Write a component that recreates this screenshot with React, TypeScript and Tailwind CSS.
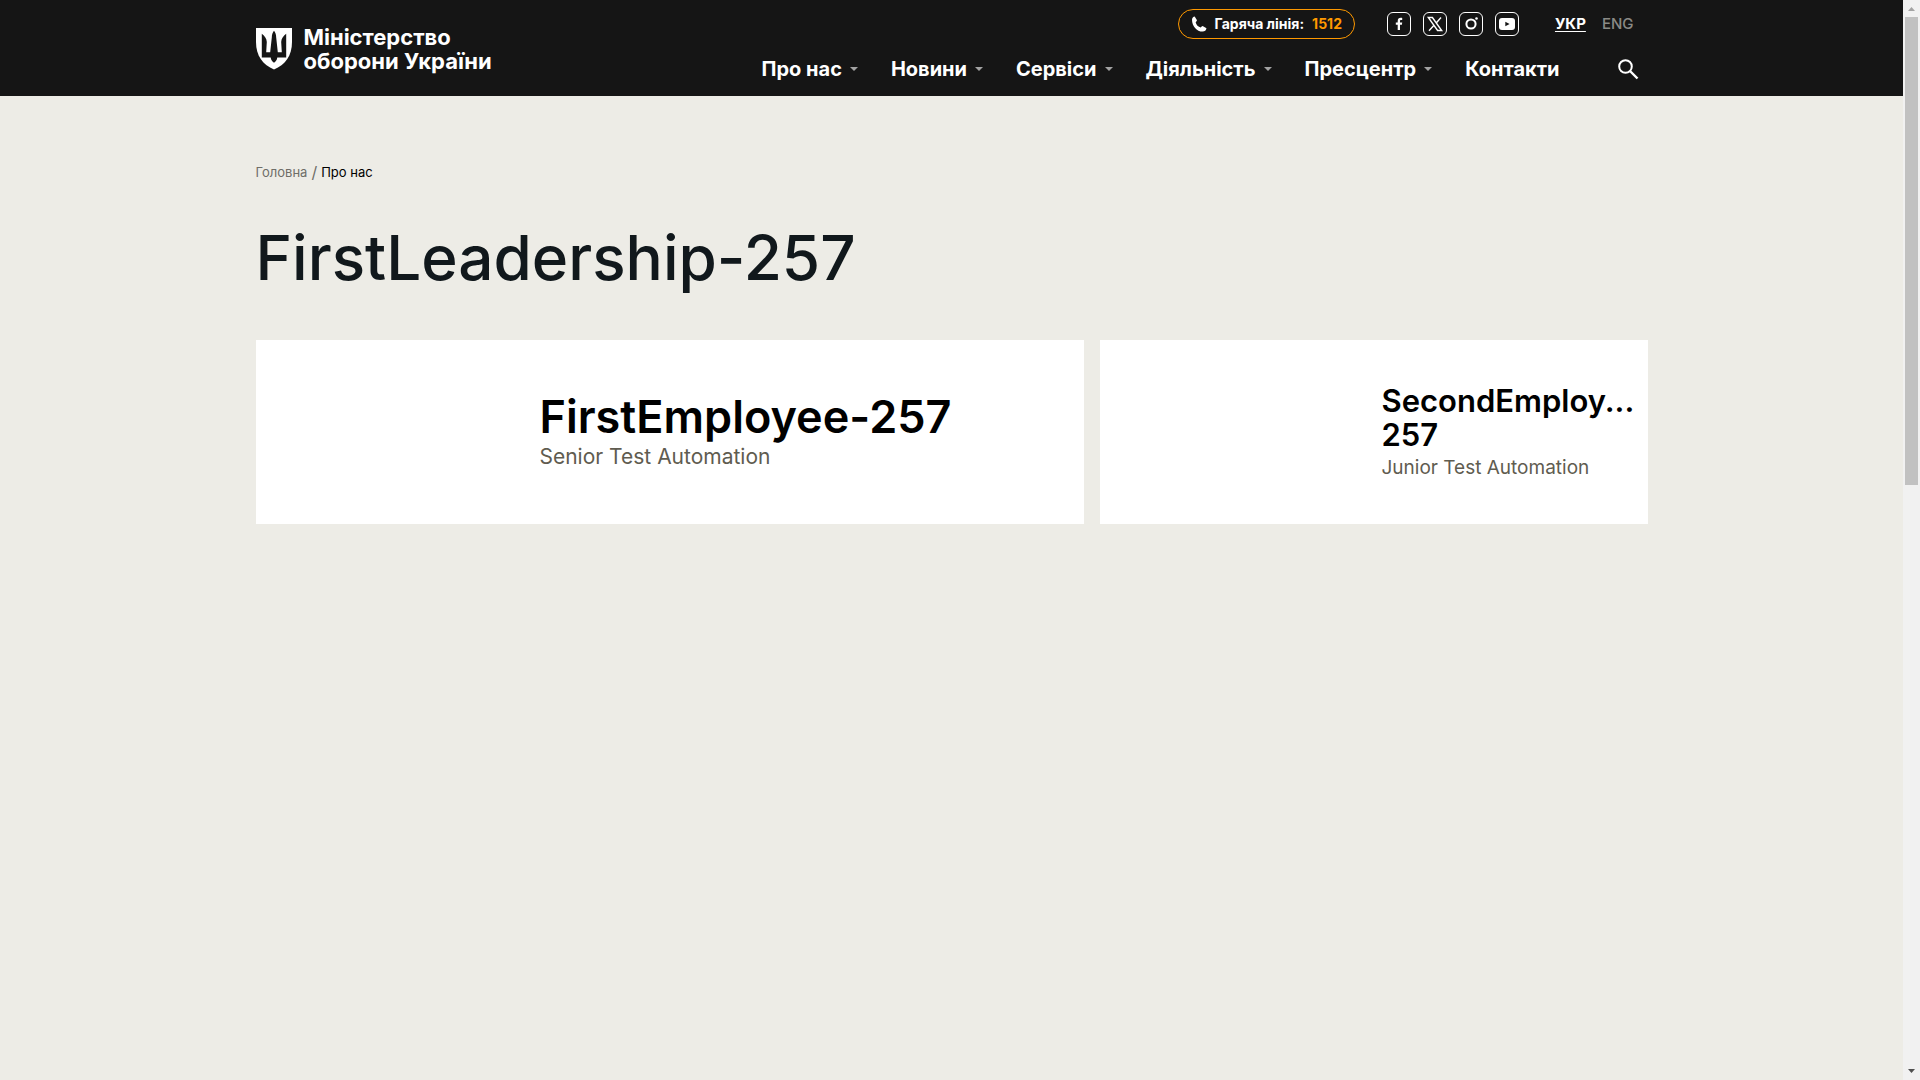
import React from "react";

const NAV = [
  { label: "Про нас", menu: true },
  { label: "Новини", menu: true },
  { label: "Сервіси", menu: true },
  { label: "Діяльність", menu: true },
  { label: "Пресцентр", menu: true },
  { label: "Контакти", menu: false },
];

function Shield() {
  return (
    <svg viewBox="0 0 36 42" className="h-[42px] w-9 shrink-0" aria-hidden="true">
      <path d="M0 0H36V14C36 28 29 37 18 41.5C7 37 0 28 0 14Z" fill="#fff" />
      <path
        d="M5.8 5.8C8.8 8 10.6 10.6 10.8 14L10.2 24.3H14.2L15.8 9.5C15.8 6.5 16.8 4.3 18 2.8C19.2 4.3 20.2 6.5 20.2 9.5L21.8 24.3H25.8L25.2 14C25.4 10.6 27.2 8 30.2 5.8V29.5H21.3C21 31.8 19.8 33.6 18 34.8C16.2 33.6 15 31.8 14.7 29.5H5.8Z"
        fill="#151515"
      />
    </svg>
  );
}

function Social({ label, children }: { label: string; children: React.ReactNode }) {
  return (
    <a href="#" aria-label={label} className="block size-6">
      <svg viewBox="0 0 24 24" className="size-6" fill="none">
        <rect x="0.5" y="0.5" width="23" height="23" rx="5.5" stroke="#fff" />
        {children}
      </svg>
    </a>
  );
}

function Header() {
  return (
    <header className="bg-[#151515] text-white">
      <div className="mx-auto flex h-24 max-w-[1392px] justify-between">
        <a href="#" className="flex items-center gap-3 pt-px text-[22px] font-bold leading-6">
          <Shield />
          <span>
            Міністерство
            <br />
            оборони України
          </span>
        </a>
        <div className="flex flex-col items-end">
          <div className="flex h-12 items-center pr-[14px]">
            <a
              href="tel:1512"
              className="mr-8 flex h-[30px] items-center rounded-full border border-[#f90] px-3 text-sm font-bold"
            >
              <svg viewBox="0 0 24 24" className="mr-2 size-4" fill="#fff" aria-hidden="true">
                <path d="M1.5 5.5C1.5 3 3.5 1 5.5.8L9 6.5C8.4 8 7.6 8.7 7 9.3C7.6 13 11 16.5 14.7 17.3C15.5 16 16.3 15.3 17.5 15L23.2 18.5C23 21.5 20.5 23.4 17.5 23.4C8.5 23.4 1.5 14.5 1.5 5.5Z" />
              </svg>
              Гаряча лінія:
              <span className="ml-2 text-[#f90]">1512</span>
            </a>
            <div className="mr-9 flex gap-3">
              <Social label="Facebook">
                <path
                  d="M10.7 18V12.8H8.8V10.5H10.7V9C10.7 6.9 11.9 5.8 13.7 5.8C14.4 5.8 15 5.9 15.2 5.9V7.9H14.1C13.2 7.9 13 8.4 13 9.1V10.5H15.2L14.9 12.8H13V18Z"
                  fill="#fff"
                />
              </Social>
              <Social label="X">
                <path
                  d="M5.3 5.5H9.4L18.7 18.5H14.6ZM18 5.5L13 11.2M11 13.3L6 18.7"
                  stroke="#fff"
                  strokeWidth="1.4"
                />
              </Social>
              <Social label="Instagram">
                <circle cx="12" cy="12" r="4.6" stroke="#fff" strokeWidth="2" />
                <circle cx="17.5" cy="6.5" r="1.3" fill="#fff" />
              </Social>
              <Social label="YouTube">
                <rect x="4" y="6" width="16" height="12" rx="3" fill="#fff" />
                <path d="M10.3 9.7V14.3L14.6 12Z" fill="#151515" />
              </Social>
            </div>
            <a href="#" className="mr-4 text-[15px] font-bold underline underline-offset-2">
              УКР
            </a>
            <a href="#" className="text-[15px] font-medium text-[#8a8a86]">
              ENG
            </a>
          </div>
          <nav className="flex h-[42px] items-center pr-2">
            <ul className="flex gap-[33px]">
              {NAV.map((item) => (
                <li key={item.label}>
                  <a href="#" className="flex items-center gap-2 text-xl font-bold leading-6">
                    {item.label}
                    {item.menu && (
                      <svg viewBox="0 0 8 4" className="h-1 w-2" aria-hidden="true">
                        <path d="M0 0H8L4 4Z" fill="#a3a3a3" />
                      </svg>
                    )}
                  </a>
                </li>
              ))}
            </ul>
            <button type="button" aria-label="Пошук" className="ml-14">
              <svg viewBox="0 0 24 24" className="size-6" fill="none" stroke="#fff" strokeWidth="2">
                <circle cx="9.5" cy="9.5" r="6.3" />
                <path d="M14 14L21.5 21.5" strokeWidth="2.4" />
              </svg>
            </button>
          </nav>
        </div>
      </div>
    </header>
  );
}

function Scrollbar() {
  return (
    <div className="flex w-[17px] shrink-0 flex-col items-center justify-between bg-[#f1f1f1]" aria-hidden="true">
      <svg viewBox="0 0 17 17" className="size-[17px] shrink-0">
        <path d="M5 11L8.5 7L12 11Z" fill="#a3a3a3" />
      </svg>
      <div className="w-[13px] flex-1">
        <div className="h-[44.7%] bg-[#c1c1c1]" />
      </div>
      <svg viewBox="0 0 17 17" className="size-[17px] shrink-0">
        <path d="M5 6L8.5 10L12 6Z" fill="#505050" />
      </svg>
    </div>
  );
}

export default function App() {
  return (
    <div className="flex h-screen overflow-hidden bg-[#edece6] font-['Inter','Noto_Sans',sans-serif]">
      <div className="min-w-0 flex-1">
        <Header />
        <main className="mx-auto max-w-[1392px] pt-16">
          <nav className="flex gap-1 text-[13px] leading-6" aria-label="Breadcrumb">
            <a href="#" className="text-[#6f6e68]">
              Головна
            </a>
            <span className="text-base leading-6 text-[#6f6e68]">/</span>
            <span className="text-black">Про нас</span>
          </nav>
          <h1 className="mt-[38px] text-[62px] font-medium leading-[72px] text-[#11181c]">FirstLeadership-257</h1>
          <div className="mt-[46px] grid grid-cols-[828fr_548fr] gap-4">
            <a href="#" className="flex h-[184px] flex-col justify-center bg-white pb-0.5 pl-[284px] pr-3">
              <h2 className="text-[45px] font-semibold leading-[52px] text-black">FirstEmployee-257</h2>
              <p className="text-[21px] leading-7 text-[#5f5c50]">Senior Test Automation</p>
            </a>
            <a href="#" className="flex h-[184px] flex-col justify-center bg-white pl-[282px] pr-3">
              <h2 className="text-[31px] font-semibold leading-[34px] text-black">
                SecondEmploy...
                <br />
                257
              </h2>
              <p className="mt-1 text-[19px] leading-6 text-[#5f5c50]">Junior Test Automation</p>
            </a>
          </div>
        </main>
      </div>
      <Scrollbar />
    </div>
  );
}
